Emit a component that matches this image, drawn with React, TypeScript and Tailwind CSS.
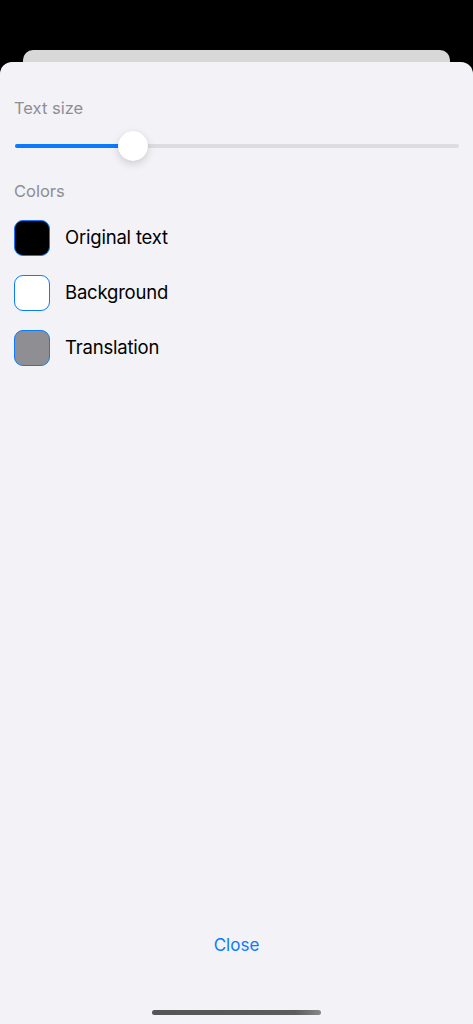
import React from "react";

const font = { fontFamily: "Inter, 'Liberation Sans', sans-serif" };

function Row({ color, label }: { color: string; label: string }) {
  return (
    <div className="flex items-center h-[36px]">
      <div className={`w-[36px] h-[36px] rounded-[9px] border-[1.5px] border-[#0a7aff] ${color}`} />
      <span className="ml-[15px] text-[18.5px] text-black tracking-[-0.2px]">{label}</span>
    </div>
  );
}

export default function App() {
  return (
    <div className="w-[473px] h-[1024px] bg-black flex flex-col overflow-hidden" style={font}>
      <div className="h-[50px] shrink-0" />
      <div className="mx-[23px] h-[12px] shrink-0 rounded-t-[10px] bg-[#d8d8d8]" />
      <div className="flex-1 bg-[#f2f2f7] rounded-t-[12px] flex flex-col px-[14px]">
        <div className="mt-[36px] text-[16.5px] leading-[20px] text-[#8e8e93]">Text size</div>
        <div className="relative mt-[10px] h-[36px] flex items-center">
          <div className="ml-[1px] w-full h-[4px] rounded-full bg-[#dcdce1] flex">
            <div className="w-[118px] h-full rounded-full bg-[#0a7aff]" />
          </div>
          <div className="absolute left-[104px] top-[3px] w-[30px] h-[30px] rounded-full bg-white shadow-[0_3px_8px_rgba(0,0,0,0.15),0_0_1px_rgba(0,0,0,0.1)]" />
        </div>
        <div className="mt-[17px] text-[16.5px] leading-[20px] text-[#8e8e93]">Colors</div>
        <div className="mt-[19px] flex flex-col gap-[19px]">
          <Row color="bg-black" label="Original text" />
          <Row color="bg-white" label="Background" />
          <Row color="bg-[#8e8e93]" label="Translation" />
        </div>
        <div className="flex-1" />
        <div className="text-center text-[17px] text-[#0a7aff] leading-[22px] mb-[54px]">Close</div>
        <div className="flex justify-center mb-[9px]">
          <div className="w-[169px] h-[5px] rounded-full bg-[linear-gradient(90deg,#555,#5c5c5c_85%,#888)]" />
        </div>
      </div>
    </div>
  );
}
